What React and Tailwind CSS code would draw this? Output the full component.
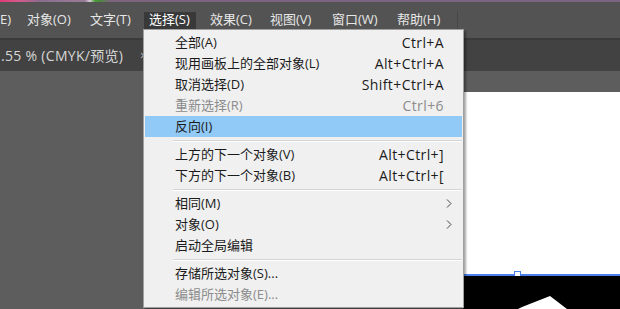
const items = [
  { label: '全部(A)', key: 'Ctrl+A' },
  { label: '现用画板上的全部对象(L)', key: 'Alt+Ctrl+A' },
  { label: '取消选择(D)', key: 'Shift+Ctrl+A' },
  { label: '重新选择(R)', key: 'Ctrl+6', disabled: true },
  { label: '反向(I)', active: true },
  { sep: true },
  { label: '上方的下一个对象(V)', key: 'Alt+Ctrl+]' },
  { label: '下方的下一个对象(B)', key: 'Alt+Ctrl+[' },
  { sep: true },
  { label: '相同(M)', sub: true },
  { label: '对象(O)', sub: true },
  { label: '启动全局编辑' },
  { sep: true },
  { label: '存储所选对象(S)...' },
  { label: '编辑所选对象(E)...', disabled: true },
];

function MenuRow({ item }) {
  if (item.sep) {
    return (
      <div className="h-[7px] flex items-center pl-[28px]">
        <div className="w-full border-t border-[#d5d5d5] border-b border-b-white" />
      </div>
    );
  }
  return (
    <div
      className={`h-[21px] flex items-center justify-between pl-[30px] pr-[18px] ${
        item.active ? 'bg-[#91c9f7]' : ''
      } ${item.disabled ? 'text-[#8c8c8c]' : 'text-[#1b1b1b]'}`}
    >
      <span>{item.label}</span>
      {item.key && <span className="text-[14px] tracking-[0.4px]">{item.key}</span>}
      {item.sub && (
        <svg width="6" height="9" viewBox="0 0 6 9" className="mr-[-8px]">
          <path d="M1 0.5 L5 4.5 L1 8.5" fill="none" stroke="#444" strokeWidth="1" />
        </svg>
      )}
    </div>
  );
}

export default function App() {
  return (
    <div
      className="relative w-[620px] h-[309px] overflow-hidden bg-[#5d5d5d] text-[13px] flex flex-col"
      style={{ fontFamily: '"Open Sans", "Noto Sans CJK SC", sans-serif' }}
    >
      {/* strip of the window behind */}
      <div className="h-[2px] bg-[linear-gradient(90deg,#e23a78_0px,#d35a8c_20px,#8a6c8e_40px,#9a7c98_85px,#d8d0d8_90px,#4a9a3a_95px,#4a8a3a_100px,#7d6580_110px,#7a6383_620px)]" />

      {/* menu bar */}
      <div className="h-[36px] bg-[#535353] flex items-center text-[#e6e6e6] whitespace-nowrap">
        <div className="flex items-center">
          <span className="w-[27px]">E)</span>
          <span className="w-[63px]">对象(O)</span>
          <span className="w-[54px]">文字(T)</span>
          <span className="w-[66px] h-[17px] flex items-center">
            <span className="bg-[#393939] h-[17px] pl-[5px] pr-[6px] flex items-center text-white">选择(S)</span>
          </span>
          <span className="w-[60px]">效果(C)</span>
          <span className="w-[62px]">视图(V)</span>
          <span className="w-[65px]">窗口(W)</span>
          <span className="w-[60px]">帮助(H)</span>
        </div>
        <div className="h-[27px] mt-[8px] border-l border-[#474747]" />
      </div>
      <div className="h-[2px] bg-[#3a3a3a]" />

      {/* document tab row */}
      <div className="h-[31px] bg-[#424242] flex items-center text-[#d6d6d6] whitespace-nowrap">
        <span className="w-[140px] pl-[1px] text-[14px] tracking-[0.3px]">.55 % (CMYK/预览)</span>
        <span className="text-[12px] text-[#bdbdbd]">×</span>
      </div>

      {/* canvas */}
      <div className="flex-1 flex">
        <div className="w-[463px]" />
        <div className="flex-1 flex flex-col">
          <div className="h-[21px] bg-[#5d5d5d]" />
          <div className="h-[182px] bg-white" />
          <div className="relative h-[2px] bg-[#4a7ff0]">
            <div className="absolute left-[51px] -top-[3px] w-[7px] h-[7px] border border-[#4a7ff0] bg-white" />
          </div>
          <div className="flex-1 bg-black relative">
            <svg width="157" height="33" className="absolute left-0 top-0">
              <polygon points="59,31 87,20 104,33 55,33" fill="#fff" />
            </svg>
          </div>
        </div>
      </div>

      {/* dropdown menu */}
      <div className="absolute left-[143px] top-[29px] w-[321px] bg-[#f0f0f0] border border-[#a0a0a0] shadow-[2px_2px_2px_rgba(0,0,0,0.35)] pt-[2px] pb-[2px] px-[1px] whitespace-nowrap">
        {items.map((item, i) => (
          <MenuRow key={i} item={item} />
        ))}
      </div>
    </div>
  );
}
